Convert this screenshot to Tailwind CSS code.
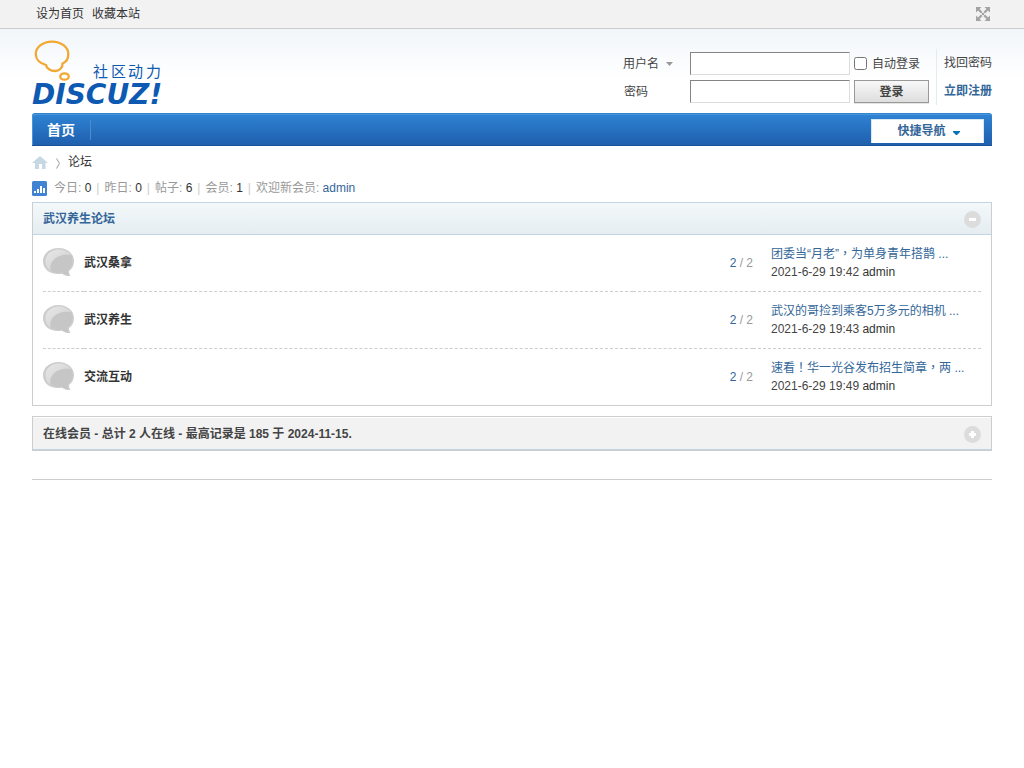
<!DOCTYPE html>
<html lang="zh-CN">
<head>
<meta charset="utf-8">
<meta name="viewport" content="width=device-width, initial-scale=1">
<title>论坛</title>
<script src="https://cdn.jsdelivr.net/npm/@tailwindcss/browser@4"></script>
</head>
<body class="bg-white font-['Liberation_Sans','Noto_Sans_CJK_SC',sans-serif] text-xs leading-[18px] text-[#444444]">
<svg class="absolute size-0" aria-hidden="true">
  <defs>
    <linearGradient id="bubble-shine" x1="0" y1="0" x2="1" y2="1"><stop offset="0" stop-color="#e8e8e8"/><stop offset="1" stop-color="#cccccc"/></linearGradient>
    <symbol id="bubble" viewBox="0 0 31 29">
      <path fill="#cdcdcd" d="M15.500 0C24 0 31 5.500 31 13c0 4.500-2 8-5 10 0 2 .5 3.500 1.500 5-3 .3-6-.5-8.500-2.300C8 27.500 0 22 0 13 0 5.500 7 0 15.500 0z"/>
      <path fill="url(#bubble-shine)" d="M16 1.500C9 1.500 2.500 6 2.500 13c0 4.500 2 8 5.500 10 16-3 19-10 20.500-15C26 4 21 1.500 16 1.500z"/>
      <path fill="#c6c6c6" d="M28 7c3 6 1.500 12-3.500 15.500L25.500 27c-2.500-.3-4.500-1-6.500-2.500-4 1-8 .3-11-1.700C5 16 12 4.500 28 7z"/>
    </symbol>
  </defs>
</svg>

<div class="flex h-[29px] items-center justify-between border-b border-[#cdcdcd] bg-[#f2f2f2] px-8">
  <nav class="flex gap-2 pl-1 text-[#333333]">
    <a href="#">设为首页</a>
    <a href="#">收藏本站</a>
  </nav>
  <button type="button" aria-label="切换到宽版" class="mr-0.5">
    <svg class="block" width="14" height="14" viewBox="0 0 14 14" fill="#a3a3a3" stroke="#a3a3a3">
      <path stroke="none" d="M0 0h5.500L0 5.500zM14 0v5.500L8.500 0zM0 14V8.500L5.500 14zM14 14H8.500L14 8.500z"/>
      <path fill="none" stroke-width="2.200" d="M2 2l3.800 3.800M12 2L8.200 5.800M2 12l3.800-3.800M12 12L8.200 8.200"/>
      <rect x="6" y="6" width="2" height="2" stroke="none"/>
    </svg>
  </button>
</div>

<header class="bg-linear-to-b from-[#f1f6fa] to-white to-60% px-8">
  <div class="flex h-[84px] justify-between">
    <h1>
      <a href="#" class="block pt-2.5" aria-label="社区动力 DISCUZ!">
        <svg class="block overflow-visible" width="136" height="74" viewBox="0 0 136 74">
          <g fill="none" stroke="#f2a833" stroke-width="2.300">
            <path d="M14 26C7.500 24.500 3.800 20 3.800 15 3.800 8 11 2.600 20 2.600S36.300 8 36.300 15c0 5-2 8-5.800 9.500.3 4-3 7.500-7.500 7.500-4.500 0-8.500-2.500-9-6z"/>
            <ellipse cx="32.500" cy="37.500" rx="4.300" ry="3.200"/>
          </g>
          <text y="38" fill="#0e59b2" font-family="Noto Sans CJK SC" font-size="15"><tspan x="61">社</tspan><tspan x="79">区</tspan><tspan x="96">动</tspan><tspan x="114">力</tspan></text>
          <text x="0" y="65" fill="#0e59b2" font-family="DejaVu Sans" font-weight="700" font-style="italic" font-size="28">DISCUZ!</text>
        </svg>
      </a>
    </h1>
    <form class="flex gap-[7px] pt-5">
      <div class="grid h-14 grid-cols-[63px_160px_75px] content-start items-center gap-x-1 gap-y-[5px] pt-[3px]">
        <label for="user" class="flex items-center gap-[7px]">用户名
          <svg width="7" height="4" viewBox="0 0 7 4" fill="#999"><path d="M0 0h7L3.500 4z"/></svg>
        </label>
        <input id="user" type="text" class="h-[23px] min-w-0 border border-[#848484] border-r-[#dddddd] border-b-[#dddddd] bg-white px-1">
        <label class="flex items-center gap-[5px] whitespace-nowrap"><input type="checkbox" class="size-[13px]">自动登录</label>
        <label for="pass" class="pl-px">密码</label>
        <input id="pass" type="password" class="h-[23px] min-w-0 border border-[#848484] border-r-[#dddddd] border-b-[#dddddd] bg-white px-1">
        <button type="submit" class="h-[23px] border border-[#999999] bg-linear-to-b from-[#f8f8f8] to-[#dedede] font-bold leading-[20px] shadow-[0_1px_0_#e4e4e4]">登录</button>
      </div>
      <div class="flex h-14 flex-col gap-2.5 border-l border-[#e1edf0] pt-[5px] pl-[7px] whitespace-nowrap">
        <a href="#">找回密码</a>
        <a href="#" class="font-bold text-[#336699]">立即注册</a>
      </div>
    </form>
  </div>
</header>

<main class="px-8">
  <nav class="flex h-[33px] items-center justify-between rounded-t-[3px] border-t border-b border-t-[#3084d0] border-b-[#1b5397] bg-linear-to-b from-[#2f83d3] to-[#1f5fae] pr-2 shadow-[inset_1px_1px_0_#4796dc]">
    <a href="#" class="border-r border-[#4b8ccb] px-[15px] text-sm leading-[20px] font-bold text-white">首页</a>
    <button type="button" class="mt-0.5 flex h-6 w-[113px] items-center justify-center gap-[7px] border border-b-0 border-[#d8e8f5] bg-white pl-0.5 font-bold text-[#336699]">快捷导航
      <svg class="mt-1" width="7" height="4" viewBox="0 0 7 4" fill="#0072b6"><path d="M0 0h7v1L4 4H3L0 1z"/></svg>
    </button>
  </nav>

  <div class="flex items-center pt-[7px] text-[#333333]">
    <a href="#" aria-label="首页"><svg class="block" width="16" height="13" viewBox="0 0 16 13" fill="#c5d8e4"><path d="M8 0l8 7H13.500v6H10V8H7v5H3V7H0z"/></svg></a>
    <svg class="mt-0.5 mr-[7px] ml-2" width="5" height="11" viewBox="0 0 5 11" fill="none" stroke="#999"><path d="M.5.500l3 5-3 5"/></svg>
    <a href="#">论坛</a>
  </div>

  <div class="mt-2 flex items-center text-[#999999]">
    <svg class="mr-[7px]" width="15" height="15" viewBox="0 0 15 15"><rect width="15" height="15" rx="1.500" fill="#3f83d2"/><path fill="#fff" d="M2 10h2v2H2zM5 8h2v4H5zM8 5h2v7H8zM11 7h2v5h-2z"/></svg>
    <p>今日: <em class="text-[#333333] not-italic">0</em><span class="mx-[5px] text-[#cccccc]">|</span>昨日: <em class="text-[#333333] not-italic">0</em><span class="mx-[5px] text-[#cccccc]">|</span>帖子: <em class="text-[#333333] not-italic">6</em><span class="mx-[5px] text-[#cccccc]">|</span>会员: <em class="text-[#333333] not-italic">1</em><span class="mx-[5px] text-[#cccccc]">|</span>欢迎新会员: <a href="#" class="text-[#336699]">admin</a></p>
  </div>

  <section class="mt-[5px] border border-[#cdcdcd] border-t-[#c2d5e3]">
    <div class="flex h-8 items-center justify-between border-b border-[#c2d5e3] bg-linear-to-b from-[#f3f8f9] to-[#e5edf2] px-2.5">
      <h2 class="font-bold text-[#336699]"><a href="#">武汉养生论坛</a></h2>
      <button type="button" aria-label="收起" class="mt-0.5"><svg class="block" width="17" height="17" viewBox="0 0 17 17"><circle cx="8.500" cy="8.500" r="8.500" fill="#dcdcdc"/><path fill="#fff" d="M5 7h7v3H5z"/></svg></button>
    </div>
    <div class="px-2.5">
      <table class="w-full">
        <tbody class="divide-y divide-dashed divide-[#cdcdcd]">
          <tr class="h-14">
            <td class="w-[41px]"><svg class="block" width="31" height="29"><use href="#bubble"/></svg></td>
            <td><a href="#" class="font-bold text-[#333333]">武汉桑拿</a></td>
            <td class="w-[120px] text-right text-[#999999]"><span class="text-[#336699]">2</span> / 2</td>
            <td class="w-[228px] pl-[18px] whitespace-nowrap"><a href="#" class="block text-[#336699]">团委当“月老”<span class="font-['Noto_Sans_CJK_TC',sans-serif]" lang="zh-TW">，</span>为单身青年搭鹊 ...</a>2021-6-29 19:42 <a href="#" class="text-[#333333]">admin</a></td>
          </tr>
          <tr class="h-[57px]">
            <td><svg class="block" width="31" height="29"><use href="#bubble"/></svg></td>
            <td><a href="#" class="font-bold text-[#333333]">武汉养生</a></td>
            <td class="text-right text-[#999999]"><span class="text-[#336699]">2</span> / 2</td>
            <td class="pl-[18px] whitespace-nowrap"><a href="#" class="block text-[#336699]">武汉的哥捡到乘客5万多元的相机 ...</a>2021-6-29 19:43 <a href="#" class="text-[#333333]">admin</a></td>
          </tr>
          <tr class="h-[57px]">
            <td><svg class="block" width="31" height="29"><use href="#bubble"/></svg></td>
            <td><a href="#" class="font-bold text-[#333333]">交流互动</a></td>
            <td class="text-right text-[#999999]"><span class="text-[#336699]">2</span> / 2</td>
            <td class="pl-[18px] whitespace-nowrap"><a href="#" class="block text-[#336699]">速看<span class="font-['Noto_Sans_CJK_TC',sans-serif]" lang="zh-TW">！</span>华一光谷发布招生简章<span class="font-['Noto_Sans_CJK_TC',sans-serif]" lang="zh-TW">，</span>两 ...</a>2021-6-29 19:49 <a href="#" class="text-[#333333]">admin</a></td>
          </tr>
        </tbody>
      </table>
    </div>
  </section>

  <section class="mt-2.5 border border-[#cdcdcd]">
    <div class="flex h-[33px] items-center justify-between border-t border-b border-t-white border-b-[#c2d5e3] bg-[#f2f2f2] px-2.5">
      <h3 class="font-bold">在线会员 - 总计 2 人在线 - 最高记录是 185 于 2024-11-15.</h3>
      <button type="button" aria-label="展开" class="mt-0.5"><svg class="block" width="17" height="17" viewBox="0 0 17 17"><circle cx="8.500" cy="8.500" r="8.500" fill="#dcdcdc"/><path fill="#fff" d="M5 7h2V5h3v2h2v3h-2v2H7v-2H5z"/></svg></button>
    </div>
  </section>
</main>

<footer class="mx-8 mt-7 border-t border-[#cdcdcd]"></footer>
</body>
</html>
